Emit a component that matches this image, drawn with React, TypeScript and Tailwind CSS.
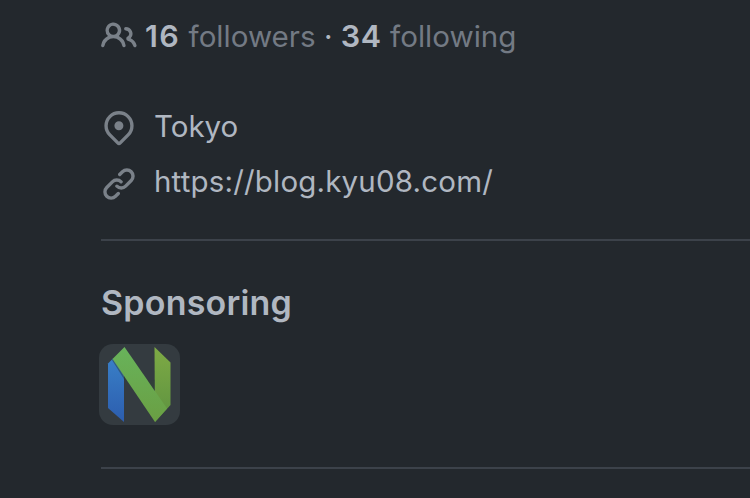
import type { ReactNode } from 'react';

function Octicon({ children, className = '' }: { children: ReactNode; className?: string }) {
  return (
    <svg viewBox="0 0 16 16" fill="currentColor" className={`size-9 shrink-0 text-[#7a8189] ${className}`}>
      {children}
    </svg>
  );
}

function NeovimLogo() {
  return (
    <svg viewBox="0 0 81 81" className="size-[81px]">
      <defs>
        <linearGradient id="blue" x1="0" y1="0" x2="0" y2="1">
          <stop offset="0" stopColor="#397fc7" />
          <stop offset="1" stopColor="#2c5dae" />
        </linearGradient>
        <linearGradient id="right" x1="0" y1="0" x2="0" y2="1">
          <stop offset="0" stopColor="#7eaa45" />
          <stop offset="1" stopColor="#5d9240" />
        </linearGradient>
        <linearGradient id="diagonal" x1="0" y1="0" x2="0" y2="1">
          <stop offset="0" stopColor="#68b35b" />
          <stop offset="1" stopColor="#6a9f43" />
        </linearGradient>
      </defs>
      <path d="M9 19.5 14 14.5 25 31V78L9 64Z" fill="url(#blue)" />
      <path d="M55.5 3 71.5 18.5V61L56 78Z" fill="url(#right)" />
      <path d="M13.5 15 25.5 3 68 64.5 56 78Z" fill="url(#diagonal)" />
      <path d="m13.5 15 12 18v3L13 16Z" fill="#2c3a3c" opacity=".5" />
      <path d="M55.5 36v10.5L49 37Z" fill="#2f4a2f" opacity=".3" />
    </svg>
  );
}

export default function App() {
  return (
    <main className="h-[498px] w-[750px] overflow-hidden bg-[#23282d] pl-[101px] font-['Inter',sans-serif] text-[#b0b7c1]">
      <div className="flex h-[72px] items-center text-[29.6px] text-[#737a84]">
        <Octicon className="mr-2">
          <path d="M2 5.5a3.5 3.5 0 1 1 5.898 2.549 5.508 5.508 0 0 1 3.034 4.084.75.75 0 1 1-1.482.235 4 4 0 0 0-7.9 0 .75.75 0 0 1-1.482-.236A5.507 5.507 0 0 1 3.102 8.05 3.493 3.493 0 0 1 2 5.5ZM11 4a3.001 3.001 0 0 1 2.22 5.018 5.01 5.01 0 0 1 2.56 3.012.749.749 0 0 1-.885.954.752.752 0 0 1-.549-.514 3.507 3.507 0 0 0-2.522-2.372.75.75 0 0 1-.574-.73v-.352a.75.75 0 0 1 .416-.672A1.5 1.5 0 0 0 11 5.5.75.75 0 0 1 11 4Zm-5.5-.5a2 2 0 1 0-.001 3.999A2 2 0 0 0 5.5 3.5Z" />
        </Octicon>
        <p className="whitespace-pre">
          <b className="text-[30.5px] font-semibold tracking-[1.4px] text-[#b0b7c1]">16</b>
          {' followers '}
          <span className="text-[#b0b7c1]">·</span>{' '}
          <b className="text-[30.5px] font-semibold tracking-[0.6px] text-[#b0b7c1]">34</b>
          {' following'}
        </p>
      </div>

      <ul className="pt-[27px] text-[29.5px]">
        <li className="flex h-[55px] items-center">
          <Octicon className="mr-[17px] mt-[3px]">
            <path d="m12.596 11.596-3.535 3.536a1.5 1.5 0 0 1-2.122 0l-3.535-3.536a6.5 6.5 0 1 1 9.192-9.193 6.5 6.5 0 0 1 0 9.193Zm-1.06-8.132v-.001a5 5 0 1 0-7.072 7.072L8 14.07l3.536-3.534a5 5 0 0 0 0-7.072ZM8 9a2 2 0 1 1-.001-3.999A2 2 0 0 1 8 9Z" />
          </Octicon>
          <span>Tokyo</span>
        </li>
        <li className="flex h-[55px] items-center">
          <Octicon className="mr-[17px] mt-1">
            <path d="m7.775 3.275 1.25-1.25a3.5 3.5 0 1 1 4.95 4.95l-2.5 2.5a3.5 3.5 0 0 1-4.95 0 .751.751 0 0 1 .018-1.042.751.751 0 0 1 1.042-.018 1.998 1.998 0 0 0 2.83 0l2.5-2.5a2.002 2.002 0 0 0-2.83-2.83l-1.25 1.25a.751.751 0 0 1-1.042-.018.751.751 0 0 1-.018-1.042Zm-4.69 9.64a1.998 1.998 0 0 0 2.83 0l1.25-1.25a.751.751 0 0 1 1.042.018.751.751 0 0 1 .018 1.042l-1.25 1.25a3.5 3.5 0 1 1-4.95-4.95l2.5-2.5a3.5 3.5 0 0 1 4.95 0 .751.751 0 0 1-.018 1.042.751.751 0 0 1-1.042.018 1.998 1.998 0 0 0-2.83 0l-2.5 2.5a1.998 1.998 0 0 0 0 2.83Z" />
          </Octicon>
          <span className="tracking-[0.18px]">https://blog.kyu08.com/</span>
        </li>
      </ul>

      <section className="mt-[30px] h-[230px] border-y-2 border-[#3c424a] pt-[39px]">
        <h2 className="h-[46px] text-[34px] leading-[46px] font-semibold tracking-[0.2px]">Sponsoring</h2>
        <div className="mt-[18px] -ml-0.5 size-[81px] overflow-hidden rounded-[14px] bg-[#343b40]">
          <NeovimLogo />
        </div>
      </section>
    </main>
  );
}
